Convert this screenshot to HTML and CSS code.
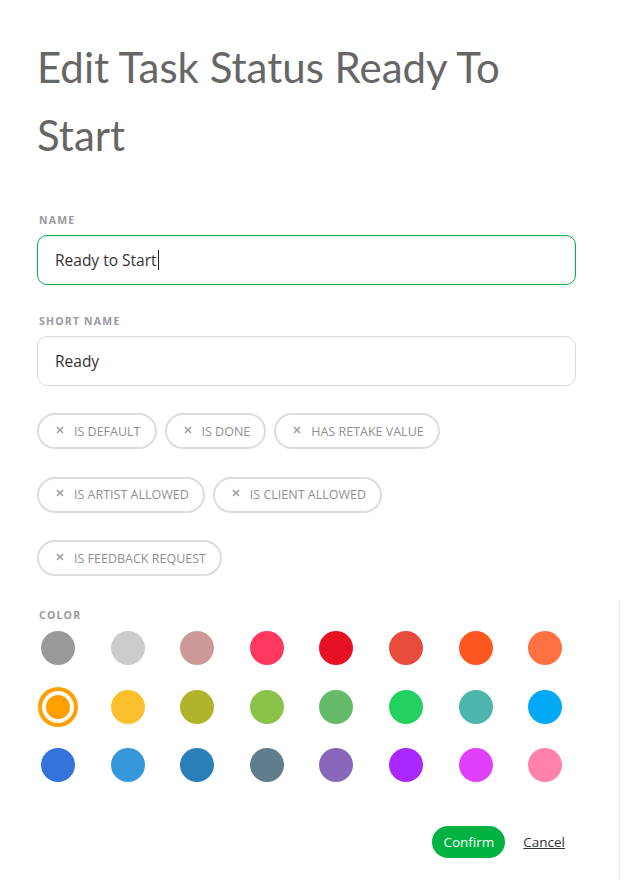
FILE: index.html
```html
<!DOCTYPE html>
<html>
<head>
<meta charset="utf-8">
<link rel="stylesheet" href="styles.css">
</head>
<body>
<div class="page">
  <h1 class="title">Edit Task Status Ready To Start</h1>

  <div class="field">
    <label class="label">Name</label>
    <div class="input focused"><span>Ready to Start</span><span class="caret"></span></div>
  </div>

  <div class="field field-second">
    <label class="label">Short name</label>
    <div class="input"><span>Ready</span></div>
  </div>

  <div class="chips">
    <div class="chip-row">
      <span class="chip"><svg class="x" viewBox="0 0 8 8"><path d="M1 1L7 7M7 1L1 7"/></svg>Is default</span>
      <span class="chip"><svg class="x" viewBox="0 0 8 8"><path d="M1 1L7 7M7 1L1 7"/></svg>Is done</span>
      <span class="chip"><svg class="x" viewBox="0 0 8 8"><path d="M1 1L7 7M7 1L1 7"/></svg>Has retake value</span>
    </div>
    <div class="chip-row">
      <span class="chip"><svg class="x" viewBox="0 0 8 8"><path d="M1 1L7 7M7 1L1 7"/></svg>Is artist allowed</span>
      <span class="chip"><svg class="x" viewBox="0 0 8 8"><path d="M1 1L7 7M7 1L1 7"/></svg>Is client allowed</span>
    </div>
    <div class="chip-row">
      <span class="chip"><svg class="x" viewBox="0 0 8 8"><path d="M1 1L7 7M7 1L1 7"/></svg>Is feedback request</span>
    </div>
  </div>

  <div class="color-field">
    <label class="label">Color</label>
    <div class="swatches">
      <span class="swatch" style="background:#999999"></span>
      <span class="swatch" style="background:#cccccc"></span>
      <span class="swatch" style="background:#cc9999"></span>
      <span class="swatch" style="background:#ff3860"></span>
      <span class="swatch" style="background:#e81123"></span>
      <span class="swatch" style="background:#e74c3c"></span>
      <span class="swatch" style="background:#ff5722"></span>
      <span class="swatch" style="background:#ff7043"></span>
      <span class="swatch selected" style="background-color:#ffa000"></span>
      <span class="swatch" style="background:#fbc02d"></span>
      <span class="swatch" style="background:#afb42b"></span>
      <span class="swatch" style="background:#8bc34a"></span>
      <span class="swatch" style="background:#66bb6a"></span>
      <span class="swatch" style="background:#22d160"></span>
      <span class="swatch" style="background:#4db6ac"></span>
      <span class="swatch" style="background:#03a9f4"></span>
      <span class="swatch" style="background:#3273dc"></span>
      <span class="swatch" style="background:#3498db"></span>
      <span class="swatch" style="background:#2980b9"></span>
      <span class="swatch" style="background:#607d8b"></span>
      <span class="swatch" style="background:#8966ba"></span>
      <span class="swatch" style="background:#aa28ff"></span>
      <span class="swatch" style="background:#e040fb"></span>
      <span class="swatch" style="background:#ff82aa"></span>
    </div>
  </div>

  <div class="footer">
    <button class="confirm">Confirm</button>
    <a class="cancel" href="#">Cancel</a>
  </div>
</div>
</body>
</html>
```
FILE: styles.css
```css
html, body {
  margin: 0;
  padding: 0;
  background: #fff;
}
body {
  font-family: "Open Sans", "Noto Sans", sans-serif;
  color: #333;
  width: 632px;
  height: 880px;
  position: relative;
  overflow: hidden;
}
body::after {
  content: "";
  position: absolute;
  left: 619px;
  top: 600px;
  width: 1px;
  height: 280px;
  background: #ececec;
}
.page {
  width: 539px;
  padding: 33px 0 0 37px;
}
.title {
  margin: 0;
  font-family: "Lato", sans-serif;
  font-weight: 400;
  font-size: 42px;
  line-height: 68px;
  color: #666;
  width: 500px;
}
.field {
  margin-top: 44px;
}
.field-second {
  margin-top: 29px;
}
.label {
  display: block;
  font-size: 10.5px;
  font-weight: 700;
  letter-spacing: 1.2px;
  line-height: 14px;
  text-transform: uppercase;
  color: #9a9a9a;
  padding-left: 2px;
  margin-bottom: 8px;
}
.input {
  box-sizing: border-box;
  height: 50px;
  border: 1px solid #dbdbdb;
  border-radius: 10px;
  padding: 0 17px;
  display: flex;
  align-items: center;
  font-size: 15.5px;
  color: #333;
  box-shadow: inset 0 1px 2px rgba(0,0,0,0.04);
}
.input.focused {
  border-color: #00b242;
}
.caret {
  display: inline-block;
  width: 1px;
  height: 20px;
  background: #222;
  margin-left: 1px;
}
.chips {
  margin-top: 27px;
  display: flex;
  flex-direction: column;
  gap: 27.5px;
}
.chip-row {
  display: flex;
  gap: 8px;
}
.chip {
  box-sizing: border-box;
  height: 36px;
  border: 2px solid #dddddd;
  border-radius: 18px;
  padding: 0 14px 0 17px;
  display: inline-flex;
  align-items: center;
  font-size: 12.5px;
  text-transform: uppercase;
  color: #909090;
}
.x {
  width: 8px;
  height: 8px;
  margin-right: 10px;
  margin-top: -3px;
  fill: none;
  stroke: #999;
  stroke-width: 1.4;
}
.color-field {
  margin-top: 32px;
}
.color-field .label {
  margin-bottom: 9px;
}
.swatches {
  display: grid;
  grid-template-columns: repeat(8, 34px);
  column-gap: 35.6px;
  row-gap: 24.5px;
  padding-left: 4px;
}
.swatch {
  width: 34px;
  height: 34px;
  border-radius: 50%;
  display: block;
}
.swatch.selected {
  box-sizing: border-box;
  padding: 5px;
  background-clip: content-box;
  box-shadow: 0 0 0 3px #ffa000;
}
.footer {
  margin-top: 44px;
  display: flex;
  justify-content: flex-end;
  align-items: center;
  gap: 18px;
  padding-right: 11px;
}
.confirm {
  height: 32px;
  border: none;
  border-radius: 16px;
  background: #00b242;
  color: #fff;
  font-family: "Open Sans", "Noto Sans", sans-serif;
  font-size: 13.5px;
  padding: 0 11px;
  cursor: pointer;
}
.cancel {
  font-size: 13.5px;
  color: #333;
  text-decoration: underline;
}
```
